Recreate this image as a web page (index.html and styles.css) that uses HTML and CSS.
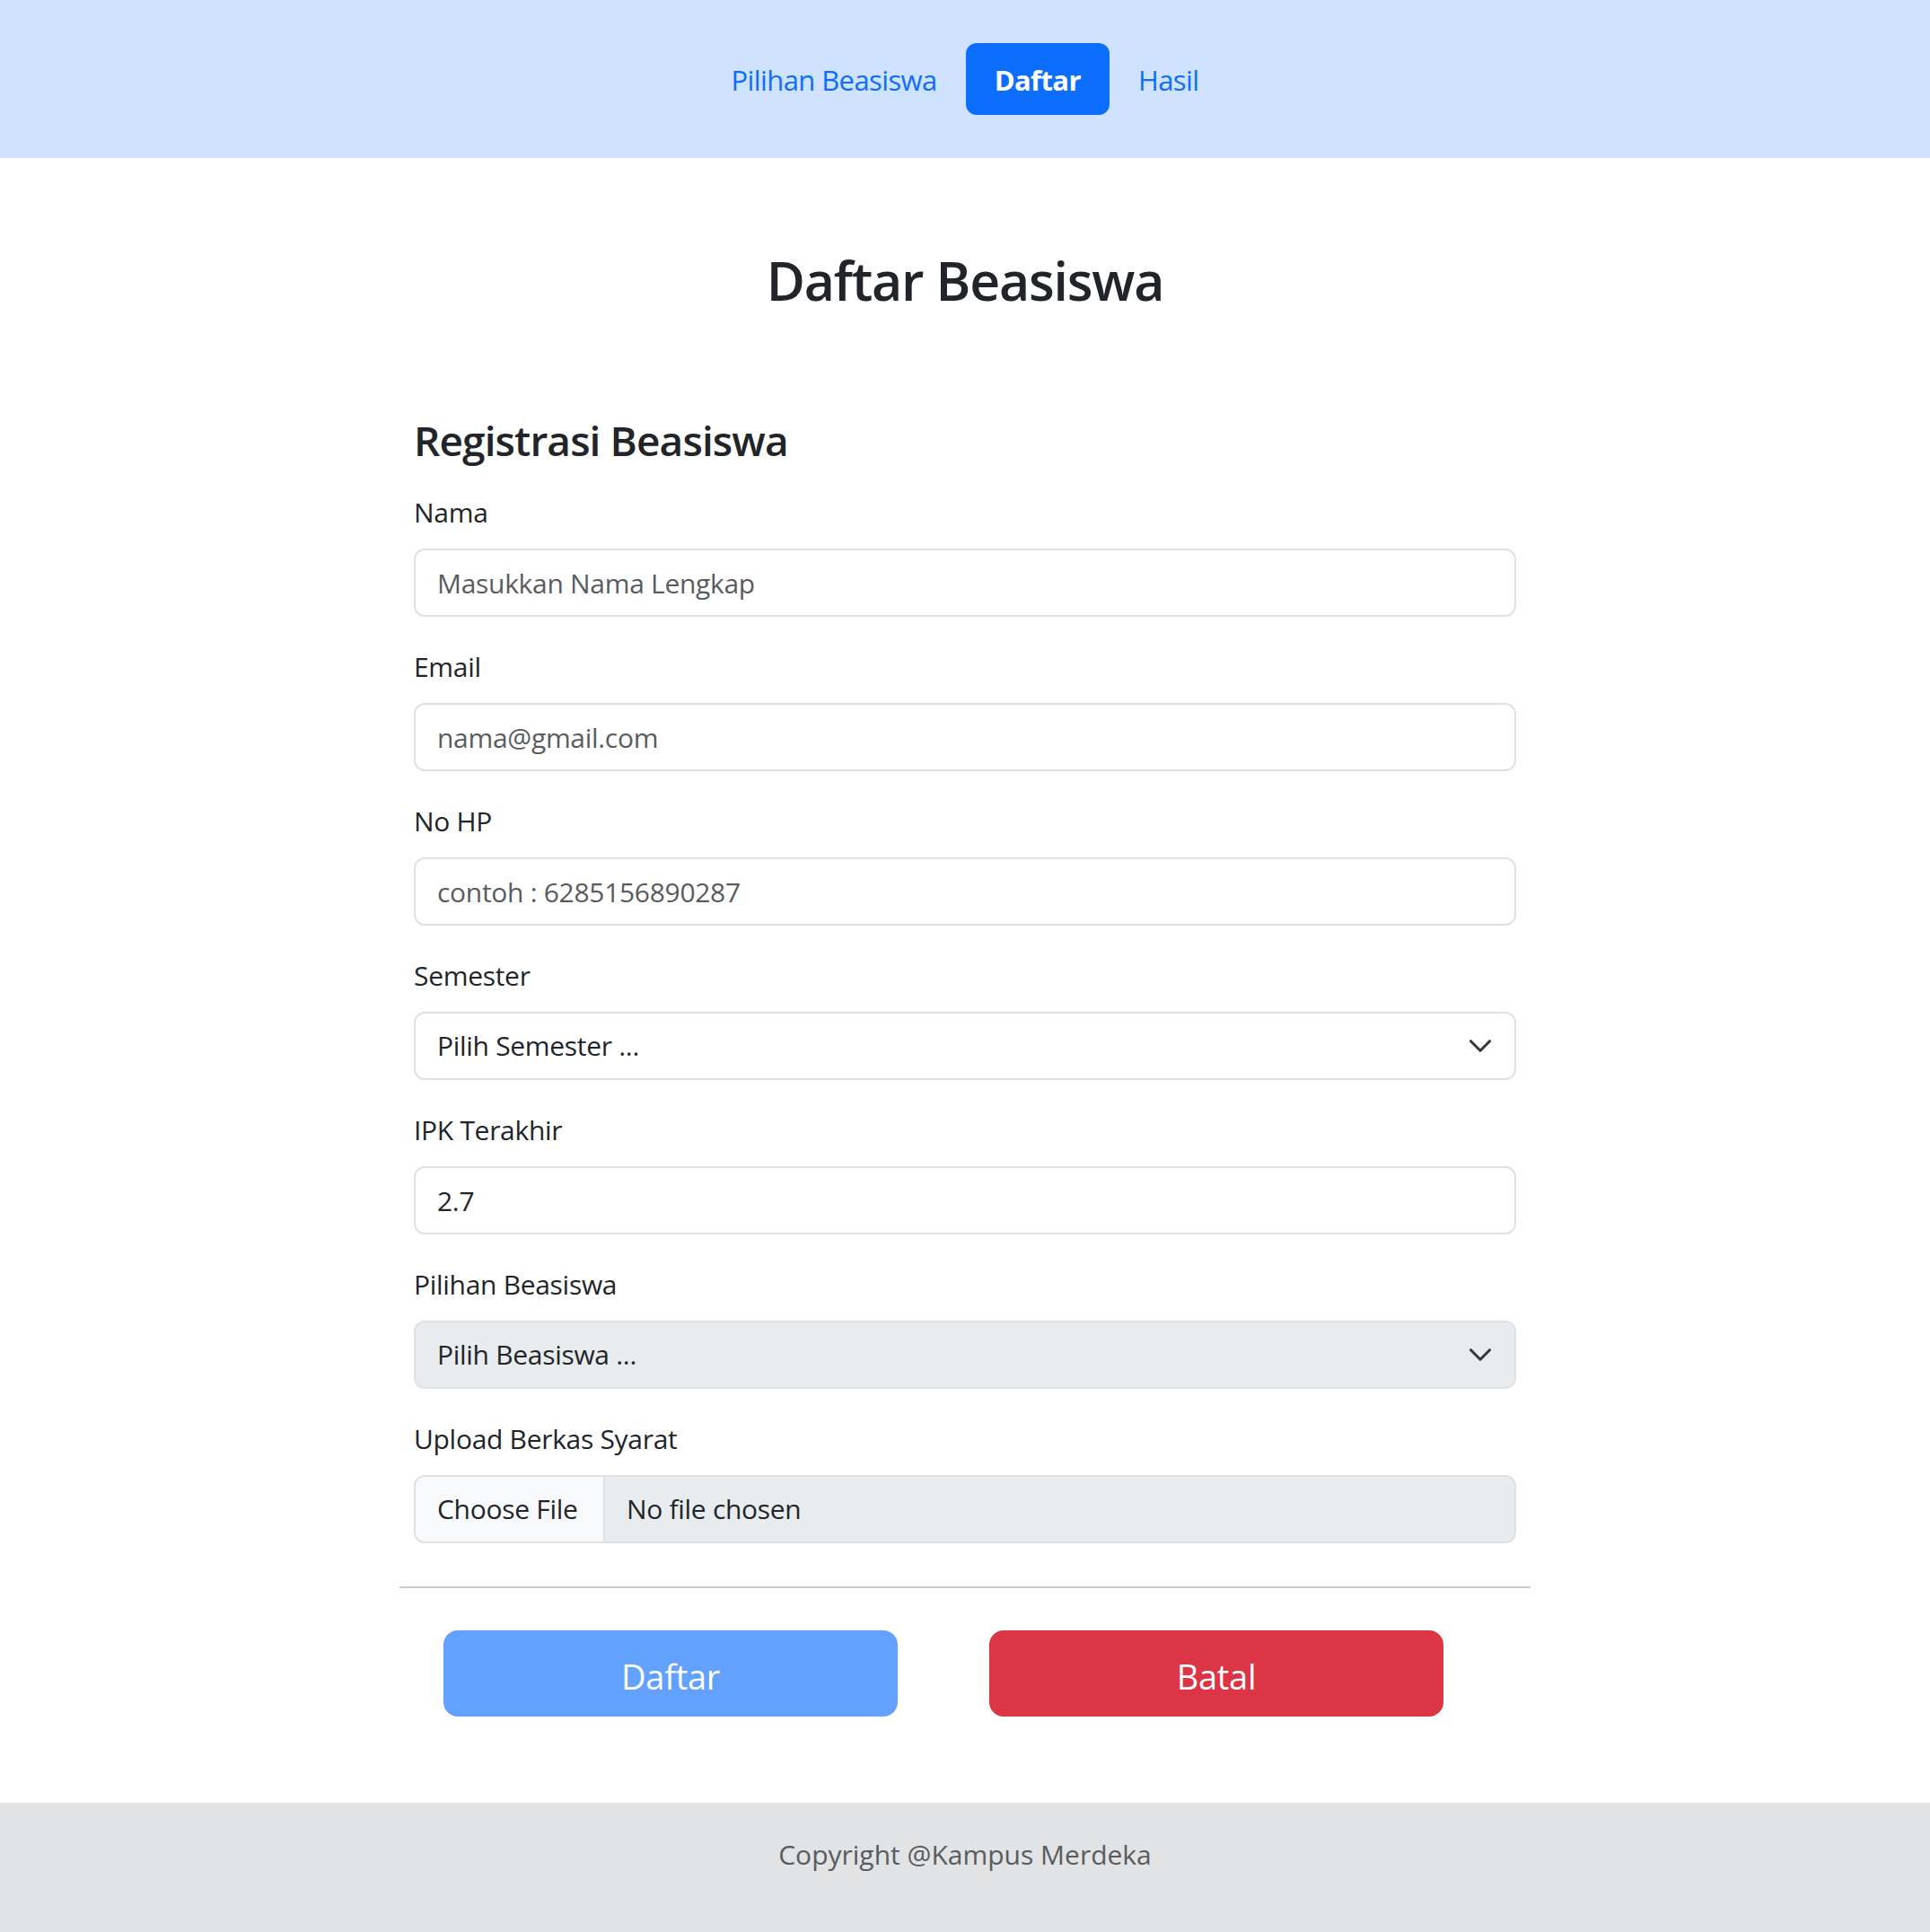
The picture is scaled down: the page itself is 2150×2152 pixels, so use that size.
FILE: index.html
```html
<!DOCTYPE html>
<html lang="id">
<head>
<meta charset="utf-8">
<title>Daftar Beasiswa</title>
<link rel="stylesheet" href="styles.css">
</head>
<body>
<nav class="topnav">
  <a class="nav-link" href="#">Pilihan Beasiswa</a>
  <a class="nav-link active" href="#">Daftar</a>
  <a class="nav-link" href="#">Hasil</a>
</nav>

<main class="container">
  <h2 class="page-title">Daftar Beasiswa</h2>

  <form class="reg-form">
    <h4 class="form-title">Registrasi Beasiswa</h4>

    <div class="group">
      <label class="label">Nama</label>
      <input class="control" type="text" placeholder="Masukkan Nama Lengkap">
    </div>
    <div class="group">
      <label class="label">Email</label>
      <input class="control" type="text" placeholder="nama@gmail.com">
    </div>
    <div class="group">
      <label class="label">No HP</label>
      <input class="control" type="text" placeholder="contoh : 6285156890287">
    </div>
    <div class="group">
      <label class="label">Semester</label>
      <div class="control select">
        <span>Pilih Semester ...</span>
        <svg class="chev" viewBox="0 0 16 16" width="28" height="28"><path fill="none" stroke="#343a40" stroke-linecap="round" stroke-linejoin="round" stroke-width="1.8" d="m2 5 6 6 6-6"/></svg>
      </div>
    </div>
    <div class="group">
      <label class="label">IPK Terakhir</label>
      <input class="control" type="text" value="2.7">
    </div>
    <div class="group">
      <label class="label">Pilihan Beasiswa</label>
      <div class="control select disabled">
        <span>Pilih Beasiswa ...</span>
        <svg class="chev" viewBox="0 0 16 16" width="28" height="28"><path fill="none" stroke="#343a40" stroke-linecap="round" stroke-linejoin="round" stroke-width="1.8" d="m2 5 6 6 6-6"/></svg>
      </div>
    </div>
    <div class="group last">
      <label class="label">Upload Berkas Syarat</label>
      <div class="control file disabled">
        <span class="file-btn">Choose File</span>
        <span class="file-name">No file chosen</span>
      </div>
    </div>
  </form>

  <hr class="divider">

  <div class="actions">
    <button class="btn btn-primary" type="button">Daftar</button>
    <button class="btn btn-danger" type="button">Batal</button>
  </div>
</main>

<footer class="footer">Copyright @Kampus Merdeka</footer>
</body>
</html>
```

FILE: styles.css
```css
* { box-sizing: border-box; }

body {
  margin: 0;
  font-family: "Open Sans", "Noto Sans", sans-serif;
  color: #212529;
  background: #fff;
  font-size: 32px;
  line-height: 1.5;
}

.topnav {
  background: #cfe2ff;
  display: flex;
  justify-content: center;
  padding: 48px 0;
}

.nav-link {
  display: block;
  padding: 17px 32px 15px;
  font-size: 31px;
  line-height: 48px;
  color: #0d6efd;
  text-decoration: none;
  border-radius: 12px;
  letter-spacing: -0.6px;
}

.nav-link.active {
  background: #0d6efd;
  color: #fff;
  font-weight: 700;
}

.container {
  width: 1260px;
  margin: 0 auto;
}

.page-title {
  margin: 99px 0 0;
  text-align: center;
  font-size: 59px;
  line-height: 74px;
  font-weight: 600;
  letter-spacing: -1.2px;
}

.reg-form {
  padding: 0 16px;
  margin-top: 113px;
}

.form-title {
  margin: 0 0 29px;
  font-size: 46px;
  line-height: 56px;
  font-weight: 600;
  letter-spacing: -0.9px;
}

.group {
  margin-bottom: 32px;
  display: flex;
  flex-direction: column;
}

.group.last { margin-bottom: 0; }

.label {
  display: block;
  margin-bottom: 16px;
  font-size: 30px;
  line-height: 48px;
  letter-spacing: -0.3px;
}

.control {
  display: block;
  width: 100%;
  height: 76px;
  padding: 12px 24px;
  font-family: inherit;
  font-size: 30px;
  line-height: 48px;
  color: #212529;
  background: #fff;
  border: 2px solid #dee2e6;
  border-radius: 12px;
  outline: none;
  letter-spacing: -0.3px;
}

.control::placeholder {
  color: #595c5f;
  opacity: 1;
}

.select {
  display: flex;
  align-items: center;
  justify-content: space-between;
  padding-right: 24px;
}

.chev {
  flex: none;
  width: 28px;
  height: 28px;
}

.disabled {
  background: #e9ecef;
}

.file {
  display: flex;
  align-items: stretch;
  padding: 0;
  overflow: hidden;
}

.file-btn {
  background: #f8f9fa;
  border-right: 2px solid #dee2e6;
  padding: 12px 24px;
  width: 211px;
  white-space: nowrap;
}

.file-name {
  padding: 12px 24px;
}

.divider {
  margin: 48px 0 0;
  border: 0;
  border-top: 2px solid #c8c9ca;
  height: 0;
}

.actions {
  display: flex;
  gap: 102px;
  padding: 47px 0 0 49px;
}

.btn {
  width: 506px;
  height: 96px;
  padding: 6px 0 0;
  border: 2px solid transparent;
  border-radius: 16px;
  font-family: inherit;
  font-size: 38px;
  line-height: 60px;
  color: #fff;
  letter-spacing: -0.3px;
}

.btn-primary {
  background: #62a1fe;
  border-color: #62a1fe;
}

.btn-danger {
  background: #dc3545;
  border-color: #dc3545;
}

.footer {
  margin-top: 96px;
  background: #e2e3e5;
  color: #595c5f;
  text-align: center;
  padding: 34px 0 63px;
  font-size: 30px;
  line-height: 48px;
  letter-spacing: 0;
}
```
